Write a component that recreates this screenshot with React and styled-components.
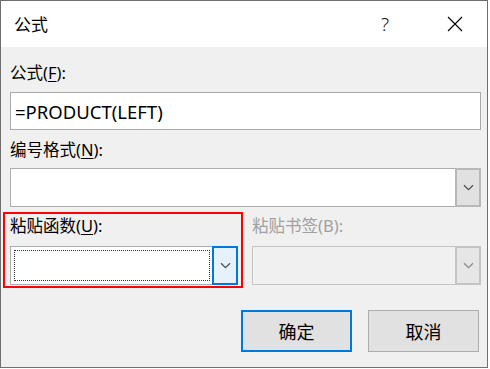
import styled, { createGlobalStyle } from "styled-components";

const GlobalStyle = createGlobalStyle`
    html, body {
        margin: 0;
        background: #ffffff;
    }
    body {
        font-family: "Noto Sans", "Noto Sans CJK SC", sans-serif;
        font-size: 16.5px;
        color: #000;
    }
`;

const Chevron = ({ color }) => (
    <svg width="11" height="7" viewBox="0 0 11 7">
        <path d="M1 1.2 L5.5 5.7 L10 1.2" fill="none" stroke={color} strokeWidth="1.3" />
    </svg>
);

const ComboBox = ({ value, focused, disabled }) => (
    <Field $disabled={disabled}>
        <FieldText $focused={focused}>{value}</FieldText>
        <DropButton $focused={focused} $disabled={disabled}>
            <Chevron color={disabled ? "#8a8a8a" : "#505050"} />
        </DropButton>
    </Field>
);

const App = () => {
    return (
        <>
            <GlobalStyle />
            <Window>
                <TitleBar>
                    <Title>公式</Title>
                    <HelpButton>?</HelpButton>
                    <CloseButton>
                        <svg width="16" height="16" viewBox="0 0 16 16">
                            <path d="M1 1 L15 15 M15 1 L1 15" stroke="#000" strokeWidth="1.1" />
                        </svg>
                    </CloseButton>
                </TitleBar>
                <Body>
                    <Label>公式(<u>F</u>):</Label>
                    <TextBox>=PRODUCT(LEFT)</TextBox>

                    <Label $top={10}>编号格式(<u>N</u>):</Label>
                    <ComboSlot>
                        <ComboBox />
                    </ComboSlot>

                    <PasteRow>
                        <Highlight>
                            <Label $top={2}>粘贴函数(<u>U</u>):</Label>
                            <ComboSlot $tight>
                                <ComboBox focused />
                            </ComboSlot>
                        </Highlight>
                        <Column>
                            <Label $top={4} $disabled>粘贴书签(B):</Label>
                            <ComboSlot $tight>
                                <ComboBox disabled />
                            </ComboSlot>
                        </Column>
                    </PasteRow>

                    <Buttons>
                        <Button $primary>确定</Button>
                        <Button>取消</Button>
                    </Buttons>
                </Body>
            </Window>
        </>
    );
};

export default App;

const Window = styled.div`
    width: 488px;
    height: 368px;
    box-sizing: border-box;
    border: 1px solid #6f6f6f;
    display: flex;
    flex-direction: column;
    background: #f0f0f0;
`;

const TitleBar = styled.div`
    height: 46px;
    background: #ffffff;
    display: flex;
    align-items: center;
    flex-shrink: 0;
`;

const Title = styled.div`
    flex: 1;
    padding-left: 13px;
    font-size: 17px;
    font-family: "Noto Sans CJK SC", sans-serif;
    padding-bottom: 2px;
`;

const HelpButton = styled.div`
    width: 76px;
    text-align: center;
    font-size: 19px;
    font-weight: 300;
    font-family: "Noto Sans", sans-serif;
    color: #111;
`;

const CloseButton = styled.div`
    width: 64px;
    display: flex;
    justify-content: center;
    padding-bottom: 1px;
`;

const Body = styled.div`
    flex: 1;
    padding: 16px 6px 0 9px;
    display: flex;
    flex-direction: column;
`;

const Label = styled.div`
    height: 20px;
    line-height: 20px;
    margin-top: ${(p) => p.$top || 0}px;
    color: ${(p) => (p.$disabled ? "#a0a0a0" : "#000")};
    white-space: nowrap;

    u {
        text-underline-offset: 2px;
    }
`;

const TextBox = styled.div`
    margin-top: 9px;
    height: 38px;
    box-sizing: border-box;
    border: 1px solid #a9a9a9;
    background: #ffffff;
    padding: 0 4px;
    display: flex;
    align-items: center;
    font-size: 18.5px;
`;

const ComboSlot = styled.div`
    margin-top: ${(p) => (p.$tight ? 10 : 8)}px;
`;

const Field = styled.div`
    height: 39px;
    box-sizing: border-box;
    border: 1px solid ${(p) => (p.$disabled ? "#c4c4c4" : "#adadad")};
    background: ${(p) => (p.$disabled ? "#f0f0f0" : "#ffffff")};
    display: flex;
`;

const FieldText = styled.div`
    flex: 1;
    margin: 3px 2px 3px 3px;
    outline: ${(p) => (p.$focused ? "1px dotted #333" : "none")};
    outline-offset: -1px;
`;

const DropButton = styled.div`
    width: 26px;
    box-sizing: border-box;
    margin: -1px -1px -1px 0;
    border: ${(p) =>
        p.$focused ? "2px solid #0078d7" : p.$disabled ? "2px solid #c4c4c4" : "2px solid #b8b8b8"};
    background: ${(p) => (p.$focused ? "#e5f1fb" : p.$disabled ? "#e6e6e6" : "#e1e1e1")};
    display: flex;
    align-items: center;
    justify-content: center;
`;

const PasteRow = styled.div`
    margin-top: 5px;
    display: grid;
    grid-template-columns: 240px 1fr;
    gap: 9px;
    margin-left: -7px;
`;

const Highlight = styled.div`
    border: 2px solid #ff0000;
    padding: 0 3px 0 5px;
    height: 76px;
    box-sizing: border-box;
`;

const Column = styled.div`
    display: flex;
    flex-direction: column;
`;

const Buttons = styled.div`
    margin-top: 22px;
    margin-right: 2px;
    display: flex;
    justify-content: flex-end;
    gap: 16px;
`;

const Button = styled.button`
    width: 111px;
    height: 42px;
    box-sizing: border-box;
    background: #e1e1e1;
    border: ${(p) => (p.$primary ? "2px solid #0078d7" : "1px solid #adadad")};
    font-family: "Noto Sans CJK SC", sans-serif;
    font-size: 18px;
    color: #000;
    padding: 0;
`;
